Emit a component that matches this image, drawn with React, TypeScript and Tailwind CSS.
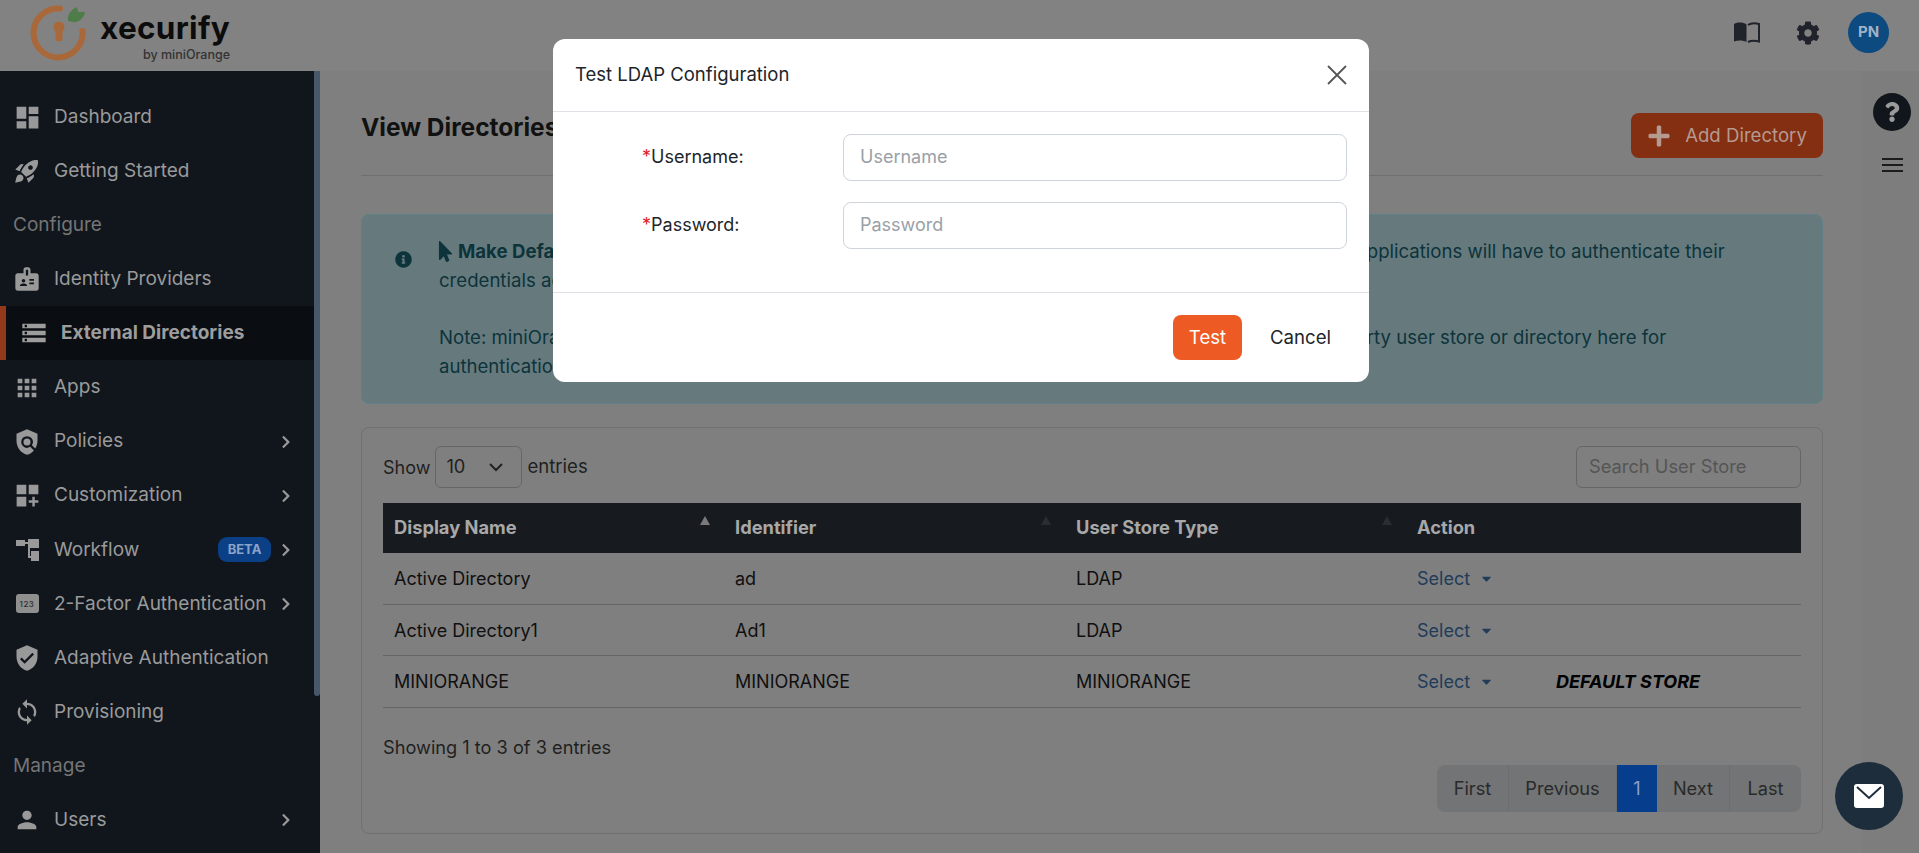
import { type ReactNode } from "react";
import { FaCaretDown, FaChevronRight, FaCog, FaInfoCircle, FaMousePointer, FaPlus, FaQuestion } from "react-icons/fa";
import {
  MdApps,
  MdBadge,
  MdDashboard,
  MdDashboardCustomize,
  MdPerson,
  MdPolicy,
  MdRocketLaunch,
  MdStorage,
  MdSync,
  MdVerifiedUser,
} from "react-icons/md";

const font = "font-['Inter','Liberation_Sans',sans-serif]";

function Logo() {
  return (
    <svg width="100" height="71" viewBox="0 0 100 71" className="shrink-0" aria-hidden>
      <path d="M60 8.5 A24.5 24.5 0 1 0 82.5 31" fill="none" stroke="#a9683a" strokeWidth="6" strokeLinecap="round" />
      <path d="M68 21 C67 14 72 9 77 7 L78 12 L85 12 C84 18 79 23 73 22 Z" fill="#4f7d4a" />
      <circle cx="59" cy="27" r="5.5" fill="#a9683a" />
      <rect x="55.5" y="28" width="7" height="13" rx="1.5" fill="#a9683a" />
    </svg>
  );
}

function Book() {
  return (
    <svg width="26" height="21" viewBox="0 0 26 21" className="text-[#20232b]" aria-hidden>
      <path d="M0 2 C4 0 9 0 12.5 2.5 V20 C9 18 4 18 0 19.5 Z" fill="currentColor" />
      <path
        d="M14 3 C17 1 21 1 25 2 V19.5 C21 18.5 17 18.5 14 20"
        fill="none"
        stroke="currentColor"
        strokeWidth="2"
      />
    </svg>
  );
}

function Workflow() {
  return (
    <svg width="23" height="22" viewBox="0 0 23 22" fill="#999" aria-hidden>
      <rect x="0" y="1" width="9" height="6" />
      <rect x="12" y="0" width="11" height="9" />
      <rect x="15" y="12" width="8" height="10" />
      <path d="M9 3h3v2H9zM12 9h2v8h1v2h-3z" />
    </svg>
  );
}

function Tfa() {
  return (
    <div className="flex h-[19px] w-[23px] items-center justify-center rounded-[3px] bg-[#8f8f8f] text-[8px] font-medium tracking-[0.5px] text-[#2a2d31]">
      123
    </div>
  );
}

type NavProps = { icon: ReactNode; label: string; arrow?: boolean; badge?: boolean };

function NavItem({ icon, label, arrow, badge }: NavProps) {
  return (
    <div className="flex h-[54.1px] items-center pr-[21px] pl-3 text-[19px] text-[#9a9a9a]">
      <div className="mr-[12px] flex w-[30px] shrink-0 items-center justify-center text-[#999]">{icon}</div>
      <span className="flex-1 whitespace-nowrap">{label}</span>
      {badge && (
        <span className="mr-[8px] flex h-[25px] w-[53px] items-center justify-center rounded-[9px] bg-[#0b3f86] text-[13px] font-bold text-[#8ba3c6]">
          BETA
        </span>
      )}
      {arrow && <FaChevronRight size={14} className="shrink-0 text-[#999]" />}
    </div>
  );
}

function Section({ label }: { label: string }) {
  return <div className="flex h-[54.1px] items-center pl-[13px] text-[19px] text-[#757575]">{label}</div>;
}

function Sidebar() {
  return (
    <aside className="flex w-[320px] shrink-0 bg-[#11161d]">
      <nav className="flex-1 pt-[19px]">
        <NavItem icon={<MdDashboard size={29} />} label="Dashboard" />
        <NavItem icon={<MdRocketLaunch size={28} />} label="Getting Started" />
        <Section label="Configure" />
        <NavItem icon={<MdBadge size={28} />} label="Identity Providers" />
        <div className="flex h-[54.1px] items-center border-l-[6px] border-[#93391a] bg-[#0a0d12] pl-[14px] text-[19px] font-bold text-[#9d9d9d]">
          <div className="flex w-[41px] shrink-0 items-center">
            <MdStorage size={28} />
          </div>
          External Directories
        </div>
        <NavItem icon={<MdApps size={28} />} label="Apps" />
        <NavItem icon={<MdPolicy size={28} />} label="Policies" arrow />
        <NavItem icon={<MdDashboardCustomize size={29} />} label="Customization" arrow />
        <NavItem icon={<Workflow />} label="Workflow" arrow badge />
        <NavItem icon={<Tfa />} label="2-Factor Authentication" arrow />
        <NavItem icon={<MdVerifiedUser size={28} />} label="Adaptive Authentication" />
        <NavItem icon={<MdSync size={28} />} label="Provisioning" />
        <Section label="Manage" />
        <NavItem icon={<MdPerson size={28} />} label="Users" arrow />
      </nav>
      <div className="w-[6px] shrink-0">
        <div className="h-[625px] rounded-b-sm bg-[#47586b]" />
      </div>
    </aside>
  );
}

function Header() {
  return (
    <header className="flex h-[71px] shrink-0 items-center bg-[#828282] pr-[30px]">
      <Logo />
      <div className="flex w-[130px] flex-col">
        <span className="text-[31.5px] leading-[36px] font-bold tracking-[0.3px] text-[#0c0c0c]">xecurify</span>
        <span className="mt-[2px] text-right text-[12.5px] leading-[14px] font-medium text-[#333]">by miniOrange</span>
      </div>
      <div className="ml-auto flex items-center pb-[6px]">
        <Book />
        <FaCog size={24} className="mr-[28px] ml-[36px] text-[#20232b]" />
        <div className="flex h-[41px] w-[41px] items-center justify-center rounded-full bg-[#0c4a80] text-[15px] font-bold text-[#9fb2c6]">
          PN
        </div>
      </div>
    </header>
  );
}

function Notice() {
  return (
    <div className="mt-[38px] flex h-[190px] rounded-lg border border-[#5f8187] bg-[#667a7d] pt-[22px] pl-[33px] text-[18.6px] leading-[28.7px] text-[#0d333b]">
      <FaInfoCircle size={17} className="mt-[14px] mr-[27px] shrink-0" />
      <div className="whitespace-nowrap">
        <FaMousePointer size={21} className="mr-[2px] -ml-[4px] inline align-[-4px]" />
        <b>Make Default:</b> Select this option to mark the directory your default user store, so that users of all
        your applications will have to authenticate their
        <br />
        credentials against it.
        <br />
        <br />
        Note: miniOrange does not save or manage your passwords, so you can also easily configure any third party
        user store or directory here for
        <br />
        authentication.
      </div>
    </div>
  );
}

const rows = [
  ["Active Directory", "ad", "LDAP", ""],
  ["Active Directory1", "Ad1", "LDAP", ""],
  ["MINIORANGE", "MINIORANGE", "MINIORANGE", "DEFAULT STORE"],
];

function Sort({ dim }: { dim?: boolean }) {
  return (
    <span
      className={`absolute top-[13px] right-[14px] h-0 w-0 border-x-[5px] border-b-[9px] border-x-transparent ${dim ? "border-b-[#2a2e33]" : "border-b-[#7a7a7a]"}`}
    />
  );
}

function DirectoryTable() {
  return (
    <div className="mt-[23px] h-[407px] rounded-lg border border-[#707070] px-[21px] pt-[18px]">
      <div className="flex items-center justify-between text-[18.3px] text-[#1f1f1f]">
        <div className="flex items-center">
          <span className="text-[18px]">Show</span>
          <div className="mx-[5px] flex h-[42px] w-[87px] items-center justify-between rounded-md border border-[#666] pr-[18px] pl-[10px]">
            10
            <svg width="14" height="9" viewBox="0 0 14 9" fill="none" stroke="#222" strokeWidth="2">
              <path d="M1 1l6 6 6-6" />
            </svg>
          </div>
          <span className="text-[18.6px]">entries</span>
        </div>
        <div className="flex h-[42px] w-[225px] items-center rounded-md border border-[#666] px-3 text-[#555]">
          Search User Store
        </div>
      </div>

      <div className="mt-[15px] grid h-[50px] grid-cols-[341px_341px_341px_1fr] items-center bg-[#171b20] text-[18.3px] font-bold text-[#a8a8a8]">
        <div className="relative flex h-full items-center pl-[11px]">Display Name<Sort /></div>
        <div className="relative flex h-full items-center pl-[11px]">Identifier<Sort dim /></div>
        <div className="relative flex h-full items-center pl-[11px]">User Store Type<Sort dim /></div>
        <div className="pl-[11px]">Action</div>
      </div>

      {rows.map(([name, id, type, extra]) => (
        <div
          key={name}
          className="grid h-[51.7px] grid-cols-[341px_341px_341px_1fr] items-center border-b border-[#666] text-[18px] text-[#101010]"
        >
          <div className="pl-[11px]">{name}</div>
          <div className="pl-[11px]">{id}</div>
          <div className="pl-[11px]">{type}</div>
          <div className="flex items-center pl-[11px]">
            <span className="text-[#213c59]">Select</span>
            <FaCaretDown size={15} className="ml-[9px] text-[#213c59]" />
            {extra && <b className="ml-[62px] text-[18px] text-black italic">{extra}</b>}
          </div>
        </div>
      ))}

      <div className="mt-[15px] flex items-start justify-between text-[18.2px] text-[#1f1f1f]">
        <span className="mt-[11px]">Showing 1 to 3 of 3 entries</span>
        <div className="mt-[42px] flex h-[47px] overflow-hidden rounded-lg bg-[#727475] text-[#2a2a2a]">
          <div className="flex w-[72px] items-center justify-center border-r border-[#6b6d6e]">First</div>
          <div className="flex w-[108px] items-center justify-center border-r border-[#6b6d6e]">Previous</div>
          <div className="flex w-[40px] items-center justify-center bg-[#063d8c] text-[#8aa2c4]">1</div>
          <div className="flex w-[73px] items-center justify-center border-r border-[#6b6d6e]">Next</div>
          <div className="flex w-[71px] items-center justify-center">Last</div>
        </div>
      </div>
    </div>
  );
}

function Modal() {
  return (
    <div className="absolute top-[39px] left-[553px] flex h-[343px] w-[816px] flex-col rounded-xl bg-white text-[18px] text-[#212529]">
      <div className="flex h-[73px] shrink-0 items-center justify-between border-b border-[#dee2e6] pr-[21px] pl-[22px]">
        <span className="text-[18.5px]">Test LDAP Configuration</span>
        <svg width="22" height="22" viewBox="0 0 22 22" stroke="#555" strokeWidth="1.8" aria-hidden>
          <path d="M2 2l18 18M20 2L2 20" />
        </svg>
      </div>
      <div className="flex-1 pt-[22px]">
        {["Username", "Password"].map((f) => (
          <div key={f} className="mb-[21px] flex h-[47px] items-center">
            <label className="w-[290px] shrink-0 pb-[2px] pl-[89px]">
              <span className="text-[#e11d2a]">*</span>
              {f}:
            </label>
            <div className="flex h-[47px] w-[504px] items-center rounded-lg border border-[#ced4da] px-4 pb-[2px] text-[#9aa0a8]">
              {f}
            </div>
          </div>
        ))}
      </div>
      <div className="flex h-[90px] shrink-0 items-center justify-end border-t border-[#dee2e6] pr-[38px] text-[18.6px]">
        <button className="h-[45px] w-[69px] rounded-lg bg-[#ee5a24] text-white">Test</button>
        <span className="ml-[28px]">Cancel</span>
      </div>
    </div>
  );
}

export default function App() {
  return (
    <div className={`relative flex h-screen w-full flex-col overflow-hidden bg-[#7f7f7f] ${font}`}>
      <Header />
      <div className="flex min-h-0 flex-1">
        <Sidebar />
        <main className="min-w-0 flex-1 pt-[42px] pr-[39px] pl-[41px]">
          <div className="flex h-[63px] items-start justify-between border-b border-[#6f6f6f]">
            <h1 className="text-[24.5px] leading-[28px] font-bold text-[#111]">View Directories</h1>
            <button className="flex h-[45px] w-[192px] items-center justify-center gap-[14px] rounded-lg bg-[#842e12] text-[18.6px] text-[#b59a90]">
              <FaPlus size={24} />
              Add Directory
            </button>
          </div>
          <Notice />
          <DirectoryTable />
        </main>
        <div className="flex w-[57px] shrink-0 flex-col items-center bg-[#7d7d7d] pt-[22px] pl-[3px]">
          <div className="flex h-[38px] w-[38px] items-center justify-center rounded-full bg-[#11161d] text-[#9a9a9a]">
            <FaQuestion size={20} />
          </div>
          <div className="mt-[27px] flex w-[21px] flex-col gap-[4px]">
            <div className="h-[2px] bg-[#1c1c1c]" />
            <div className="h-[2px] bg-[#1c1c1c]" />
            <div className="h-[2px] bg-[#1c1c1c]" />
          </div>
        </div>
      </div>

      <Modal />

      <div className="absolute top-[762px] left-[1835px] flex h-[68px] w-[68px] items-center justify-center rounded-full bg-[#1e2d3b]">
        <svg width="30" height="24" viewBox="0 0 30 24" aria-hidden>
          <rect width="30" height="24" rx="3" fill="#fff" />
          <path d="M3 3l12 11L27 3" fill="none" stroke="#1e2d3b" strokeWidth="2" />
        </svg>
      </div>
    </div>
  );
}
